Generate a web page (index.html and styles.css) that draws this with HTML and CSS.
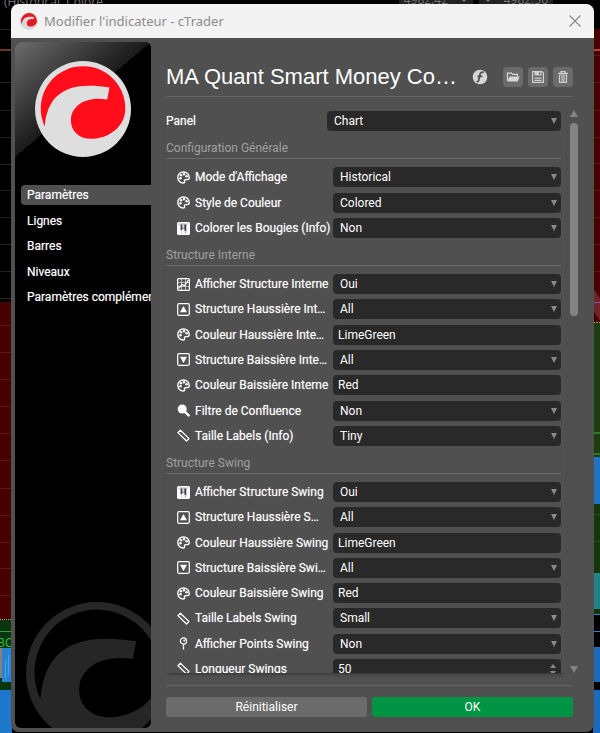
FILE: index.html
```html
<!DOCTYPE html>
<html lang="fr">
<head>
<meta charset="utf-8">
<meta name="viewport" content="width=device-width, initial-scale=1">
<title>Modifier l'indicateur - cTrader</title>
<link rel="stylesheet" href="styles.css">
</head>
<body>
<svg class="sprite" aria-hidden="true">
  <symbol id="logo" viewBox="0 0 286 286">
    <circle class="logo-disc" cx="143" cy="143" r="143"/>
    <path class="logo-core" d="M29 195A126 126 0 1 1 269 143C269 195 220 232 167 232C130 232 107 207 107 177C107 135 150 104 215 115L222 79C102 60 38 92 29 195Z"/>
  </symbol>
  <symbol id="palette" viewBox="0 0 13 13">
    <path d="M6.500 1C3.300 1 .8 3.400.8 6.500S3.300 12 6.300 12c1.200 0 1.600-.8 1.200-1.700-.4-1 .2-1.700 1.200-1.700h1.700c1.100 0 1.800-.8 1.800-2C12.200 3.400 9.700 1 6.500 1Z" fill="none" stroke="currentColor" stroke-width="1.400"/>
    <g fill="currentColor"><circle cx="3.500" cy="7.300" r="1.200"/><circle cx="4" cy="4.300" r="1.200"/><circle cx="7" cy="3.300" r="1.200"/><circle cx="9.600" cy="5.200" r="1.200"/></g>
  </symbol>
  <symbol id="bars" viewBox="0 0 13 13">
    <rect x=".6" y=".6" width="11.800" height="11.800" rx="1" fill="#c9ccd2" stroke="currentColor" stroke-width="1.200"/>
    <path d="M1 3h3v9H1zM5 6.500h2.500V12H5zM9.500 2.500h2.500V12H9.500z" fill="currentColor"/>
    <path d="M3.600 2.500h1.600v4h2.200v-4h1.800v6.500H7.600v-2H5.200v1H3.600z" fill="#3c4048"/>
  </symbol>
  <symbol id="chart" viewBox="0 0 13 13">
    <rect x=".6" y=".6" width="11.800" height="11.800" rx="1" fill="none" stroke="currentColor" stroke-width="1.200"/>
    <path d="M1 4.500h11M1 8.500h11M4.500 1v11M8.500 1v11" stroke="currentColor" stroke-width=".8" opacity=".75"/>
    <path d="M1.500 10.500L5 6.500l2.500 1.200L11.500 2" fill="none" stroke="currentColor" stroke-width="1.300"/>
  </symbol>
  <symbol id="up" viewBox="0 0 13 13">
    <rect x=".7" y=".7" width="11.600" height="11.600" rx="1.200" fill="none" stroke="currentColor" stroke-width="1.200"/>
    <path d="M6.500 3L10 9.200H3z" fill="currentColor"/>
  </symbol>
  <symbol id="down" viewBox="0 0 13 13">
    <rect x=".7" y=".7" width="11.600" height="11.600" rx="1.200" fill="none" stroke="currentColor" stroke-width="1.200"/>
    <path d="M6.500 10L10 3.800H3z" fill="currentColor"/>
  </symbol>
  <symbol id="lens" viewBox="0 0 13 13">
    <circle cx="5.200" cy="5" r="4.500" fill="currentColor"/>
    <path d="M8 7.800l3.600 3.600" stroke="currentColor" stroke-width="2.600" stroke-linecap="round"/>
  </symbol>
  <symbol id="ruler" viewBox="0 0 13 13">
    <path d="M3.400 1.200L12 9.600 9.500 12 .9 3.600Z" fill="none" stroke="currentColor" stroke-width="1.300" stroke-linejoin="round"/>
  </symbol>
  <symbol id="pin" viewBox="0 0 13 13">
    <circle cx="6.500" cy="4" r="3.100" fill="none" stroke="currentColor" stroke-width="1.200"/>
    <path d="M6.500 7v5.500" stroke="currentColor" stroke-width="1.300"/>
    <circle cx="7.300" cy="3.500" r="1" fill="currentColor"/>
  </symbol>
</svg>

<div class="desktop" aria-hidden="true">
  <span class="study">(Historical, Colore</span>
  <span class="quote quote-bid">4982.42<i class="caret"></i></span>
  <span class="quote quote-ask"><i class="caret"></i>4982.56</span>
  <svg class="chart chart-left" width="12" height="733">
    <path d="M0 29.500h12M0 82.500h12M0 110.500h12M0 137.500h12M0 164.500h12M0 190.500h12M0 217.500h12M0 244.500h12M0 271.500h12M0 298.500h12" stroke="#222"/>
    <path d="M0 50h12" stroke="#8c4526" stroke-width="1.500"/>
    <rect y="302" width="12" height="317" fill="#470000"/>
    <path d="M0 325.500h12M0 352.500h12M0 379.500h12M0 406.500h12M0 433.500h12M0 460.500h12M0 488.500h12M0 515.500h12M0 542.500h12M0 568.500h12M0 595.500h12" stroke="#5c1717"/>
    <path d="M0 619.500h12" stroke="#c8b85a" stroke-dasharray="1 1"/>
    <rect y="620" width="12" height="70" fill="#0b3510"/>
    <path d="M0 631.500h12" stroke="#2ca238"/>
    <text x="-3" y="647" fill="#2ebd3a" font-family="Liberation Sans" font-size="12">BC</text>
    <rect y="648" width="2" height="30" fill="#8a8172"/>
    <rect x="2" y="648" width="10" height="34" fill="#2583d8"/>
    <path d="M5.500 660v18M8.500 655v20" stroke="#4ba0ec"/>
    <rect y="690" width="12" height="43" fill="#1d78cb"/>
  </svg>
  <svg class="chart chart-right" width="7" height="733">
    <rect y="29" width="7" height="294" fill="#470000"/>
    <path d="M0 55.500h7M0 82.500h7M0 110.500h7M0 137.500h7M0 163.500h7M0 190.500h7M0 217.500h7M0 244.500h7M0 271.500h7" stroke="#5c1717"/>
    <path d="M0 50h7" stroke="#b4442c" stroke-width="2"/>
    <path d="M0 288L7 298V321L0 310Z" fill="#6d2429"/>
    <path d="M0 302.500h7" stroke="#7960a2"/>
    <path d="M0 322.500h7" stroke="#b3b03b" stroke-dasharray="2 1"/>
    <rect y="323" width="7" height="134" fill="#1c3c0e"/>
    <path d="M0 433h7M0 454h7" stroke="#3bb642"/>
    <rect y="457" width="7" height="47" fill="#2174c5"/>
    <rect y="504" width="7" height="69" fill="#14360d"/>
    <path d="M0 514.500h7M0 541.500h7" stroke="#2c4a20"/>
    <rect y="573" width="7" height="36" fill="#23818a"/>
    <rect y="609" width="7" height="5" fill="#14360d"/>
    <path d="M0 614.500h7M0 631.500h7" stroke="#3a80c8"/>
    <rect y="647" width="7" height="35" fill="#1d69bb"/>
    <rect y="690" width="7" height="43" fill="#1d69bb"/>
  </svg>
</div>

<main class="dialog">
  <header class="titlebar">
    <svg class="logo logo-small"><use href="#logo"/></svg>
    <span class="caption">Modifier l'indicateur - cTrader</span>
    <button class="close" type="button" aria-label="Fermer"><svg width="12" height="12" viewBox="0 0 12 12"><path d="M.5.500l11 11M11.500.500l-11 11" stroke="#858585" stroke-width="1.100"/></svg></button>
  </header>
  <div class="body">
    <aside class="sidebar">
      <div class="brand"><svg class="logo logo-brand"><use href="#logo"/></svg></div>
      <nav class="nav">
        <a class="active" href="#parametres">Paramètres</a>
        <a href="#lignes">Lignes</a>
        <a href="#barres">Barres</a>
        <a href="#niveaux">Niveaux</a>
        <a href="#complementaires">Paramètres complémentaires</a>
      </nav>
      <svg class="logo logo-mark"><use href="#logo"/></svg>
    </aside>
    <form class="content">
      <div class="heading">
        <h1>MA Quant Smart Money Co…</h1>
        <svg class="badge" width="16" height="16" viewBox="0 0 16 16"><circle cx="8" cy="8" r="7.300" fill="#d6d6d6"/><path d="M11.800 3.400C9.500 2.700 8.300 3.700 7.900 5.600L6.700 11.200C6.400 12.400 5.700 12.800 4.600 12.500M5.400 7.300h5" fill="none" stroke="#505050" stroke-width="1.700"/></svg>
        <div class="tools">
          <button type="button" aria-label="Ouvrir"><svg width="14" height="14" viewBox="0 0 14 14"><path d="M1.500 10.800V3.200h4l1 1.200h5v2" fill="none" stroke="#d8d8d8" stroke-width="1.200"/><path d="M3.500 6.500h10l-1.700 4.900H1.500z" fill="#d8d8d8"/></svg></button>
          <button type="button" aria-label="Enregistrer"><svg width="14" height="14" viewBox="0 0 14 14"><path d="M1.600 1.600h9.400l1.400 1.400v9.400H1.600z" fill="none" stroke="#d0d0d0" stroke-width="1.200"/><path d="M3.500 1.500h7v4h-7zM3.500 7.500h7v1.200h-7zM3.500 9.800h7V11h-7z" fill="#d0d0d0"/><path d="M8 2.200h1.300v2.300H8z" fill="#666"/></svg></button>
          <button type="button" aria-label="Supprimer"><svg width="14" height="14" viewBox="0 0 14 14"><path d="M2 3.300h10M5 3V1.500h4V3M3.500 5h7v7.300h-7zM6 6v5.500M8 6v5.500" fill="none" stroke="#d0d0d0" stroke-width="1.200"/></svg></button>
        </div>
      </div>

      <div class="scroller">
        <div class="fields">
          <div class="row row-main"><label for="f0">Panel</label><span class="pick"><select id="f0"><option>Chart</option></select></span></div>

          <h2>Configuration Générale</h2>
          <div class="group group-short">
            <div class="row"><svg class="icon"><use href="#palette"/></svg><label for="f1">Mode d'Affichage</label><span class="pick"><select id="f1"><option>Historical</option></select></span></div>
            <div class="row"><svg class="icon"><use href="#palette"/></svg><label for="f2">Style de Couleur</label><span class="pick"><select id="f2"><option>Colored</option></select></span></div>
            <div class="row"><svg class="icon"><use href="#bars"/></svg><label for="f3">Colorer les Bougies (Info)</label><span class="pick"><select id="f3"><option>Non</option></select></span></div>
          </div>

          <h2>Structure Interne</h2>
          <div class="group group-medium">
            <div class="row"><svg class="icon"><use href="#chart"/></svg><label for="f4">Afficher Structure Interne</label><span class="pick"><select id="f4"><option>Oui</option></select></span></div>
            <div class="row"><svg class="icon"><use href="#up"/></svg><label for="f5">Structure Haussière Int…</label><span class="pick"><select id="f5"><option>All</option></select></span></div>
            <div class="row"><svg class="icon"><use href="#palette"/></svg><label for="f6">Couleur Haussière Inte…</label><input id="f6" type="text" value="LimeGreen"></div>
            <div class="row"><svg class="icon"><use href="#down"/></svg><label for="f7">Structure Baissière Inte…</label><span class="pick"><select id="f7"><option>All</option></select></span></div>
            <div class="row"><svg class="icon"><use href="#palette"/></svg><label for="f8">Couleur Baissière Interne</label><input id="f8" type="text" value="Red"></div>
            <div class="row"><svg class="icon"><use href="#lens"/></svg><label for="f9">Filtre de Confluence</label><span class="pick"><select id="f9"><option>Non</option></select></span></div>
            <div class="row"><svg class="icon"><use href="#ruler"/></svg><label for="f10">Taille Labels (Info)</label><span class="pick"><select id="f10"><option>Tiny</option></select></span></div>
          </div>

          <h2>Structure Swing</h2>
          <div class="group group-long">
            <div class="row"><svg class="icon"><use href="#bars"/></svg><label for="f11">Afficher Structure Swing</label><span class="pick"><select id="f11"><option>Oui</option></select></span></div>
            <div class="row"><svg class="icon"><use href="#up"/></svg><label for="f12">Structure Haussière S…</label><span class="pick"><select id="f12"><option>All</option></select></span></div>
            <div class="row"><svg class="icon"><use href="#palette"/></svg><label for="f13">Couleur Haussière Swing</label><input id="f13" type="text" value="LimeGreen"></div>
            <div class="row"><svg class="icon"><use href="#down"/></svg><label for="f14">Structure Baissière Swi…</label><span class="pick"><select id="f14"><option>All</option></select></span></div>
            <div class="row"><svg class="icon"><use href="#palette"/></svg><label for="f15">Couleur Baissière Swing</label><input id="f15" type="text" value="Red"></div>
            <div class="row"><svg class="icon"><use href="#ruler"/></svg><label for="f16">Taille Labels Swing</label><span class="pick"><select id="f16"><option>Small</option></select></span></div>
            <div class="row"><svg class="icon"><use href="#pin"/></svg><label for="f17">Afficher Points Swing</label><span class="pick"><select id="f17"><option>Non</option></select></span></div>
            <div class="row"><svg class="icon"><use href="#ruler"/></svg><label for="f18">Longueur Swings</label><span class="spin"><input id="f18" type="text" inputmode="numeric" value="50"></span></div>
          </div>
        </div>
        <div class="scrollbar" aria-hidden="true"><i class="arrow-up"></i><div class="track"><div class="thumb"></div></div><i class="arrow-down"></i></div>
      </div>

      <footer class="actions">
        <button type="reset">Réinitialiser</button>
        <button class="primary" type="submit">OK</button>
      </footer>
    </form>
  </div>
</main>
</body>
</html>
```
FILE: styles.css
```css
* {
  box-sizing: border-box;
}

body {
  margin: 0;
  height: 100vh;
  padding: 4px 6px 1px 11px;
  overflow: hidden;
  background: #000;
  color: #fff;
  font: 12px/20px Roboto, "Liberation Sans", sans-serif;
}

button,
input,
select {
  font: inherit;
  color: inherit;
  border: 0;
  margin: 0;
}

.nav,
.row,
.actions {
  text-shadow: 0 0 1px rgb(255 255 255 / 50%);
}

.sprite {
  position: absolute;
  width: 0;
  height: 0;
}

/* Chart window behind the dialog */
.desktop {
  position: absolute;
  inset: 0;
  overflow: hidden;
  font: 12px/14px "Open Sans", sans-serif;
  color: #777;
}

.study,
.quote,
.chart {
  position: absolute;
  top: 0;
}

.study {
  left: 4px;
  top: -5px;
}

.quote {
  top: -7px;
  height: 14px;
  padding: 0 5px;
  display: flex;
  gap: 12px;
  align-items: center;
  background: #222;
}

.quote-bid {
  right: 127px;
}

.quote-ask {
  right: 47px;
}

.caret {
  border: 4px solid transparent;
  border-top-color: #777;
  border-bottom: 0;
}

.chart-left {
  left: 0;
}

.chart-right {
  right: 0;
}

/* Dialog */
.dialog {
  position: relative;
  height: 100%;
  display: flex;
  flex-direction: column;
  overflow: hidden;
  border-radius: 8px;
  background: #505050;
}

.titlebar {
  flex: none;
  height: 34px;
  padding: 0 9px;
  display: flex;
  align-items: center;
  gap: 6px;
  background: #f3f3f3;
}

.caption {
  flex: 1;
  color: #8b8b8b;
  font: 13px/20px "Noto Sans", "Open Sans", sans-serif;
}

.close {
  display: flex;
  padding: 4px;
  background: none;
}

.logo-disc {
  fill: var(--disc);
}

.logo-core {
  fill: var(--core);
}

.logo {
  --disc: #dedede;
  --core: #ff0d1b;
  flex: none;
}

.logo-small {
  --disc: #d8d8d8;
  --core: #e01b24;
  width: 18px;
  height: 18px;
}

.body {
  flex: 1;
  min-height: 0;
  display: flex;
  padding: 4px;
}

.sidebar {
  position: relative;
  flex: none;
  width: 136px;
  overflow: hidden;
  border-radius: 6px;
  background: #000;
}

.brand {
  height: 115px;
  padding: 19px 20px 0;
  background: linear-gradient(to bottom right, #6c6c6c, #1a1a1a 50%, #000 50%);
}

.logo-brand {
  display: block;
  width: 96px;
  height: 96px;
}

.nav {
  height: 150px;
  display: flex;
  flex-direction: column;
  justify-content: space-between;
  padding: 28px 0 0 6px;
}

.nav a {
  padding-left: 6px;
  border-radius: 4px 0 0 4px;
  color: #fff;
  text-decoration: none;
  white-space: nowrap;
}

.nav .active {
  background: #505050;
}

.logo-mark {
  --disc: #262626;
  --core: #000;
  position: absolute;
  left: 11px;
  bottom: -16px;
  width: 142px;
  height: 142px;
}

.content {
  flex: 1;
  min-width: 0;
  display: flex;
  flex-direction: column;
  padding: 16px 17px 11px 15px;
}

.heading {
  flex: none;
  height: 39px;
  display: flex;
  align-items: center;
  border-bottom: 1px solid #666;
}

h1 {
  margin: 0;
  font: 22px/36px "Liberation Sans", sans-serif;
  white-space: nowrap;
}

.badge {
  margin: 0 15px 0 auto;
}

.tools {
  display: flex;
  gap: 5px;
}

.tools button {
  display: grid;
  place-items: center;
  width: 20px;
  height: 20px;
  padding: 0;
  border-radius: 4px;
  background: #6b6b6b;
}

.scroller {
  flex: 1;
  min-height: 0;
  display: flex;
  justify-content: space-between;
  margin-right: -5px;
  padding-top: 8px;
}

.fields {
  flex: 1;
  padding-top: 6px;
  margin-right: 4px;
  padding-right: 5px;
  overflow: hidden;
  box-shadow: 0 3px 3px -2px #333;
}

.row {
  display: flex;
  align-items: center;
  height: 20px;
}

.row label {
  flex: none;
  width: 138px;
  white-space: nowrap;
}

.row-main label {
  width: 161px;
}

.icon {
  flex: none;
  width: 13px;
  height: 13px;
  margin-right: 5px;
}

.group {
  display: flex;
  flex-direction: column;
  justify-content: space-between;
  padding-left: 11px;
}

.group-short {
  height: 71px;
}

.group-medium {
  height: 172px;
}

.group-long {
  height: 197px;
}

h2 {
  margin: 6px 0 8px;
  height: 22px;
  border-bottom: 1px solid #6a6a6a;
  color: #a0a0a0;
  font: inherit;
  line-height: 22px;
}

.pick,
.spin {
  position: relative;
  flex: 1;
  display: flex;
}

.row input,
.row select {
  flex: 1;
  min-width: 0;
  height: 20px;
  padding: 0 5px;
  border-radius: 4px;
  background: #292929;
  appearance: none;
}

.row select {
  padding: 0 7px;
}

.pick::after,
.arrow-up,
.arrow-down,
.spin::before,
.spin::after {
  content: "";
  border: 3px solid transparent;
  border-top: 6px solid #8a8a8a;
  border-bottom: 0;
}

.pick::after {
  position: absolute;
  right: 4px;
  top: 7px;
  pointer-events: none;
}

.spin::before,
.spin::after {
  position: absolute;
  right: 5px;
  top: 12px;
  border-top-width: 4px;
}

.spin::before {
  top: 5px;
  transform: rotate(180deg);
}

.scrollbar {
  flex: none;
  width: 8px;
  display: flex;
  flex-direction: column;
  align-items: center;
  gap: 6px;
  padding-top: 5px;
}

.arrow-up,
.arrow-down {
  border-width: 7px 4px 0;
  border-top-color: #838383;
}

.arrow-up {
  transform: rotate(180deg);
}

.track {
  flex: 1;
  width: 8px;
}

.thumb {
  height: 36%;
  border-radius: 4px;
  background: #838383;
}

.actions {
  flex: none;
  margin-top: 12px;
  padding-top: 11px;
  display: flex;
  gap: 5px;
  border-top: 1px solid #666;
}

.actions button {
  flex: 1;
  height: 20px;
  padding: 0;
  border-radius: 3px;
  background: #6b6b6b;
}

.actions .primary {
  background: #009444;
}
```
